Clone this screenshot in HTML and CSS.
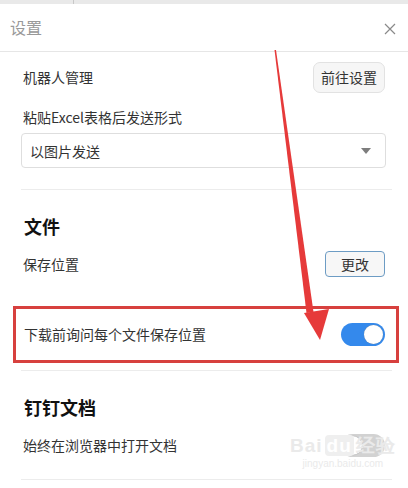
FILE: index.html
```html
<!DOCTYPE html>
<html>
    <head>
        <meta charset="utf-8">
        <title>设置</title>
        <link rel="stylesheet" href="styles.css">
    </head>
    <body>
        <div class="topbar"><span class="topbar-line"></span></div>
        <div class="header">
            <span class="title">设置</span>
            <svg class="btn-x" width="12" height="12" viewBox="0 0 12 12">
                <path d="M1 1 L11 11 M11 1 L1 11" stroke="#8a8a8a" stroke-width="1.2" fill="none"/>
            </svg>
        </div>

        <div class="panel">
            <div class="row row-first">
                <span>机器人管理</span>
                <a class="btn btn-grey" href="#">前往设置</a>
            </div>
            <div class="label">粘贴Excel表格后发送形式</div>
            <div class="select">
                <span>以图片发送</span>
                <i class="caret"></i>
            </div>
            <div class="line"></div>

            <h4>文件</h4>
            <div class="row">
                <span>保存位置</span>
                <a class="btn btn-blue" href="#">更改</a>
            </div>
            <div class="mark">
                <div class="row">
                    <span>下载前询问每个文件保存位置</span>
                    <span class="switch on"><i></i></span>
                </div>
            </div>
            <div class="line"></div>

            <h4>钉钉文档</h4>
            <div class="row">
                <span>始终在浏览器中打开文档</span>
                <span class="switch"><i></i></span>
            </div>
            <div class="line line-last"></div>
        </div>

        <!-- 水印 -->
        <div class="watermark">
            <span class="wm-big">Bai<b>du</b>经验</span>
            <span class="wm-small">jingyan.baidu.com</span>
        </div>

        <!-- 红色箭头标注 -->
        <svg class="arrow" width="408" height="488" viewBox="0 0 408 488">
            <polygon points="274.5,50 276,50 313.5,312 306.5,313" fill="#e63a3a"/>
            <polygon points="304,313 329,309 320,340" fill="#e63a3a"/>
        </svg>
    </body>
</html>
```

FILE: styles.css
```css
body{
    margin: 0;
    width: 408px;
    height: 488px;
    overflow: hidden;
    position: relative;
    background: #fff;
    font-family: "Noto Sans CJK SC", "Noto Sans", sans-serif;
    font-size: 14px;
    color: #333;
}
a{
    text-decoration: none;
    color: #333;
}
h4{
    margin: 0;
}
.topbar{
    height: 4px;
    background: #e9e9e9;
    position: relative;
}
.topbar-line{
    position: absolute;
    left: 73px;
    top: 0;
    width: 1px;
    height: 4px;
    background: #c8c8c8;
}
.header{
    height: 47px;
    border-bottom: 1px solid #e6e6e6;
    display: flex;
    align-items: center;
    justify-content: space-between;
    padding: 0 12px 0 10px;
}
.title{
    font-size: 16px;
    color: #999;
    position: relative;
    top: -1px;
}
.btn-x{
    position: relative;
    top: 1px;
}
.panel{
    margin: 0 16px 0 21px;
}
.row{
    height: 34px;
    display: flex;
    align-items: center;
    justify-content: space-between;
    padding: 0 7px 0 2px;
}
.row-first{
    height: 50px;
}
.btn{
    box-sizing: border-box;
    border-radius: 5px;
    text-align: center;
}
.btn-grey{
    width: 72px;
    height: 31px;
    line-height: 29px;
    background: #f6f6f6;
    border: 1px solid #e2e2e2;
    border-radius: 7px;
}
.btn-blue{
    width: 60px;
    height: 26px;
    line-height: 24px;
    background: #f7f7f7;
    border: 1px solid #6d9cc4;
    border-radius: 4px;
}
.label{
    height: 31px;
    line-height: 31px;
    padding-left: 2px;
}
.select{
    box-sizing: border-box;
    height: 35px;
    width: 365px;
    border: 1px solid #dedede;
    border-radius: 4px;
    display: flex;
    align-items: center;
    justify-content: space-between;
    padding: 0 14px 0 8px;
}
.caret{
    width: 0;
    height: 0;
    border-left: 5px solid transparent;
    border-right: 5px solid transparent;
    border-top: 6px solid #7d7d7d;
}
.line{
    height: 1px;
    background: #ececec;
    margin-top: 21px;
}
h4{
    font-size: 18px;
    line-height: 26px;
    color: #111;
    padding: 23px 0 0 3px;
    margin-bottom: 8px;
}
.mark{
    margin: 25px -7px 0 -8px;
    border: 3px solid #d7403e;
    padding: 8px 4px 9px 6px;
}
.mark + .line{
    margin-top: 7px;
}
.switch{
    width: 44px;
    height: 23px;
    border-radius: 12px;
    background: #d2d2d2;
    display: flex;
    align-items: center;
    padding: 0 2px;
    box-sizing: border-box;
}
.switch i{
    width: 19px;
    height: 19px;
    border-radius: 50%;
    background: #fff;
    box-shadow: 0 0 1px #888;
}
.switch.on{
    background: #3489ec;
    justify-content: flex-end;
}
.line-last{
    margin-top: 17px;
}
.watermark{
    position: absolute;
    left: 290px;
    top: 436px;
    display: flex;
    flex-direction: column;
    align-items: center;
    color: #eaeaea;
    pointer-events: none;
}
.wm-big{
    font-family: "Liberation Sans", sans-serif;
    font-size: 19px;
    line-height: 20px;
    font-weight: bold;
    letter-spacing: 1px;
}
.wm-big b{
    background: #efefef;
    color: #fff;
    border-radius: 4px;
    padding: 0 2px;
    margin: 0 2px;
}
.wm-small{
    font-family: "Liberation Sans", sans-serif;
    font-size: 10px;
    margin-top: 2px;
}
.arrow{
    position: absolute;
    left: 0;
    top: 0;
    pointer-events: none;
}
```
